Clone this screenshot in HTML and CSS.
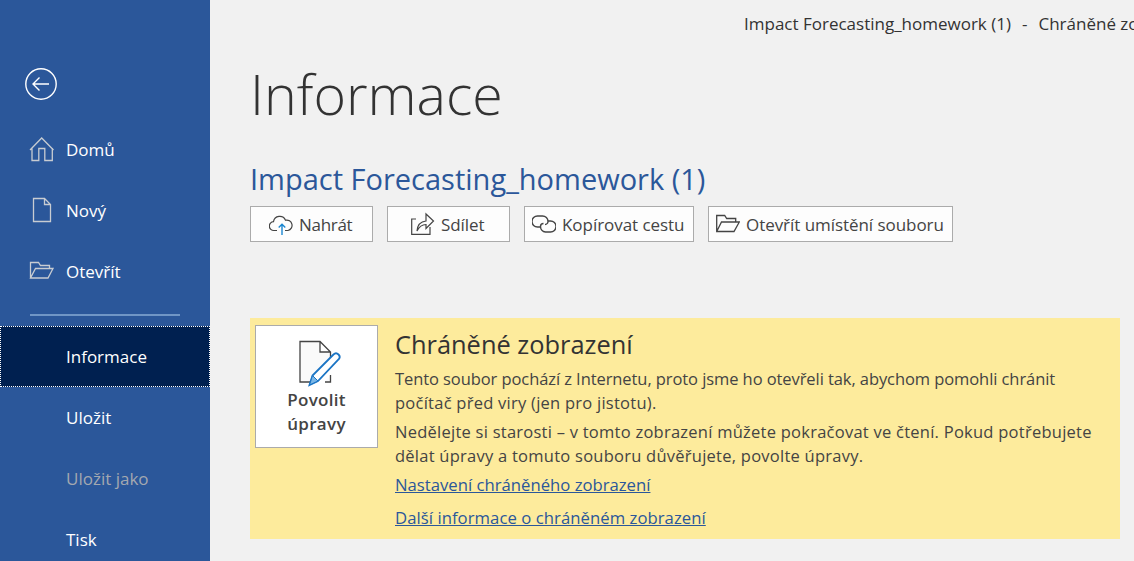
FILE: index.html
```html
<!DOCTYPE html>
<html lang="cs">
<head>
<meta charset="utf-8">
<title>Informace</title>
<link rel="stylesheet" href="styles.css">
</head>
<body>
<div class="app">
  <nav class="side">
    <svg class="back" width="32" height="32" viewBox="0 0 32 32" fill="none" stroke="#fff" stroke-width="1.4"><circle cx="16" cy="16" r="15.2"/><path d="M8 16h16M14.500 9.500 8 16l6.500 6.500"/></svg>
    <a class="item">
      <svg class="nav-ic" width="26" height="26" viewBox="0 0 26 26" fill="none" stroke="#c8ccd2" stroke-width="1.3"><path d="M1 14 12.700 2 24.500 14M3 12v12.500h6.800v-12h6v12h7.500V12"/></svg>
      <span>Domů</span>
    </a>
    <a class="item">
      <svg class="nav-ic" width="26" height="26" viewBox="0 0 26 26" fill="none" stroke="#c8ccd2" stroke-width="1.3"><path d="M4.500 1.500h11l6 6v17h-17zM15.500 1.500v6h6"/></svg>
      <span>Nový</span>
    </a>
    <a class="item">
      <svg class="nav-ic" width="26" height="26" viewBox="0 0 26 26" fill="none" stroke="#c8ccd2" stroke-width="1.3"><path d="M1.500 20V4.500h8l2 3h9v3M1.500 20H19L24 10.500H6.500z"/></svg>
      <span>Otevřít</span>
    </a>
    <div class="rule"></div>
    <a class="item active"><span>Informace</span></a>
    <a class="item"><span>Uložit</span></a>
    <a class="item muted"><span>Uložit jako</span></a>
    <a class="item"><span>Tisk</span></a>
  </nav>
  <main class="main">
    <div class="window-title">Impact Forecasting_homework (1)<span class="sep">-</span>Chráněné zobrazení - Word</div>
    <h1 class="title">Informace</h1>
    <h2 class="doc">Impact Forecasting_homework (1)</h2>
    <div class="actions">
      <button class="btn w-upload">
        <svg width="24" height="24" viewBox="0 0 24 24" fill="none" stroke="#444" stroke-width="1.2"><path d="M8 18.500H5a4.400 4.400 0 0 1-.5-8.800 6.300 6.300 0 0 1 12-1.500 5.200 5.200 0 0 1 2.500 10.300h-3"/><path d="M13 23V12.500M9.700 15.500 13 12.300l3.300 3.200" stroke="#1a86d0" stroke-width="1.4"/></svg>
        <span>Nahrát</span>
      </button>
      <button class="btn w-share">
        <svg width="24" height="24" viewBox="0 0 24 24" fill="none" stroke="#444" stroke-width="1.2"><path d="M5 7H.7v15.300H19V15"/><path d="M6 19c.5-7 4-9.500 9-10V2l7.500 7-7.500 7.500v-4c-4 0-7 2.500-9 6.500z"/></svg>
        <span>Sdílet</span>
      </button>
      <button class="btn w-copy">
        <svg width="24" height="24" viewBox="0 0 24 24" fill="none" stroke="#444" stroke-width="1.4"><path d="M8 15H5.500a5.500 5.500 0 0 1 0-11h5a5.500 5.500 0 0 1 5.500 5.500 3 3 0 0 1-3 3"/><path d="M16 9h2.500a5.500 5.500 0 0 1 0 11h-5a5.500 5.500 0 0 1-5-5.500 3 3 0 0 1 3-3"/></svg>
        <span>Kopírovat cestu</span>
      </button>
      <button class="btn w-open">
        <svg width="24" height="24" viewBox="0 0 24 24" fill="none" stroke="#444" stroke-width="1.3"><path d="M.7 19V3.500h8l2 3h9v3.500M.7 19.500H18L23.300 10H5.500z"/></svg>
        <span>Otevřít umístění souboru</span>
      </button>
    </div>
    <section class="notice">
      <button class="enable">
        <svg width="46" height="48" viewBox="0 0 46 48" fill="none"><path d="M17 42H3V1.500H23L33.500 12V22M23 1.500V12h10.500M33.500 35v7H28" stroke="#444" stroke-width="1.300" fill="#fafafa"/><path d="M12.500 45l3-9.500L36.500 14.500c1.500-1.500 3.500-1.500 5 0s1.500 3.500 0 5L21 41z" fill="#fff" stroke="#1a74c4" stroke-width="1.800"/><path d="M12.500 45l3-9.500 5.500 5.500z" fill="#7ab6e6" stroke="#1a74c4"/></svg>
        <span>Povolit<br>úpravy</span>
      </button>
      <div class="notice-body">
        <h3 class="notice-title">Chráněné zobrazení</h3>
        <p class="para"><span class="tight">Tento soubor pochází z Internetu, proto jsme ho otevřeli tak, abychom pomohli chránit</span><br>počítač před viry (jen pro jistotu).</p>
        <p class="para">Nedělejte si starosti – v tomto zobrazení můžete pokračovat ve čtení. Pokud potřebujete<br>dělat úpravy a tomuto souboru důvěřujete, povolte úpravy.</p>
        <a class="link first">Nastavení chráněného zobrazení</a>
        <a class="link second">Další informace o chráněném zobrazení</a>
      </div>
    </section>
  </main>
</div>
</body>
</html>
```
FILE: styles.css
```css
html, body { margin: 0; height: 100%; overflow: hidden; }
body { font-family: "Open Sans", "Noto Sans", sans-serif; background: #f1f1f1; color: #444; }
.app { display: flex; height: 561px; overflow: hidden; }
.side { width: 210px; flex: none; background: #2b579a; color: #fff; padding-top: 68px; box-sizing: border-box; display: flex; flex-direction: column; }
.back { margin: 0 0 19px 25px; flex: none; }
.item { height: 61px; flex: none; box-sizing: border-box; display: flex; align-items: center; padding-left: 66px; position: relative; font-size: 17px; color: #fff; }
.nav-ic { position: absolute; left: 29px; top: 17px; }
.rule { flex: none; height: 2px; width: 150px; margin: 12px 0 10px 30px; background: #7096c6; }
.active { background: #002050; outline: 1px dotted #fff; outline-offset: -1px; }
.muted { color: #a3a8b0; }
.main { flex: 1; min-width: 0; padding: 0 0 0 40px; position: relative; overflow: hidden; }
.window-title { position: absolute; left: 534px; top: 13px; white-space: nowrap; font-size: 17px; color: #333; line-height: 22px; }
.sep { margin: 0 11px; }
.title { margin: 58px 0 0; font-size: 55.500px; font-weight: 300; line-height: 72px; color: #333; }
.doc { margin: 29px 0 0; font-size: 29px; font-weight: 400; line-height: 40px; color: #2b579a; }
.actions { display: flex; gap: 14px; margin-top: 7px; }
.btn { height: 36px; box-sizing: border-box; border: 1px solid #ababab; background: #fdfdfd; display: flex; align-items: center; gap: 6px; padding: 0; font: inherit; font-size: 17px; letter-spacing: -.05px; color: #444; white-space: nowrap; }
.w-upload { width: 123px; padding-left: 18px; letter-spacing: -.3px; }
.w-share { width: 123px; padding-left: 23px; }
.w-copy { width: 170px; padding-left: 7px; }
.w-open { width: 245px; padding-left: 7px; }
.notice { margin: 76px 14px 0 0; height: 221px; box-sizing: border-box; background: #fdeb9c; padding: 7px 5px; display: flex; gap: 17px; }
.enable { width: 123px; height: 123px; flex: none; box-sizing: border-box; border: 1px solid #ababab; background: #fff; display: flex; flex-direction: column; align-items: center; padding: 14px 0 0; font: inherit; font-size: 17px; font-weight: 600; letter-spacing: .3px; line-height: 24px; color: #444; }
.enable svg { margin-left: 6px; }
.notice-body { min-width: 0; flex: 1; }
.notice-title { margin: 1px 0 0; font-size: 25.400px; font-weight: 400; line-height: 36px; color: #333; }
.para { margin: 5px 0 0; font-size: 16.500px; letter-spacing: .25px; line-height: 24px; color: #444; white-space: nowrap; }
.tight { letter-spacing: -.08px; }
.link { display: block; font-size: 16.700px; line-height: 24px; color: #2b579a; text-decoration: underline; white-space: nowrap; }
.first { margin-top: 5px; }
.second { margin-top: 9px; letter-spacing: .05px; }
```
